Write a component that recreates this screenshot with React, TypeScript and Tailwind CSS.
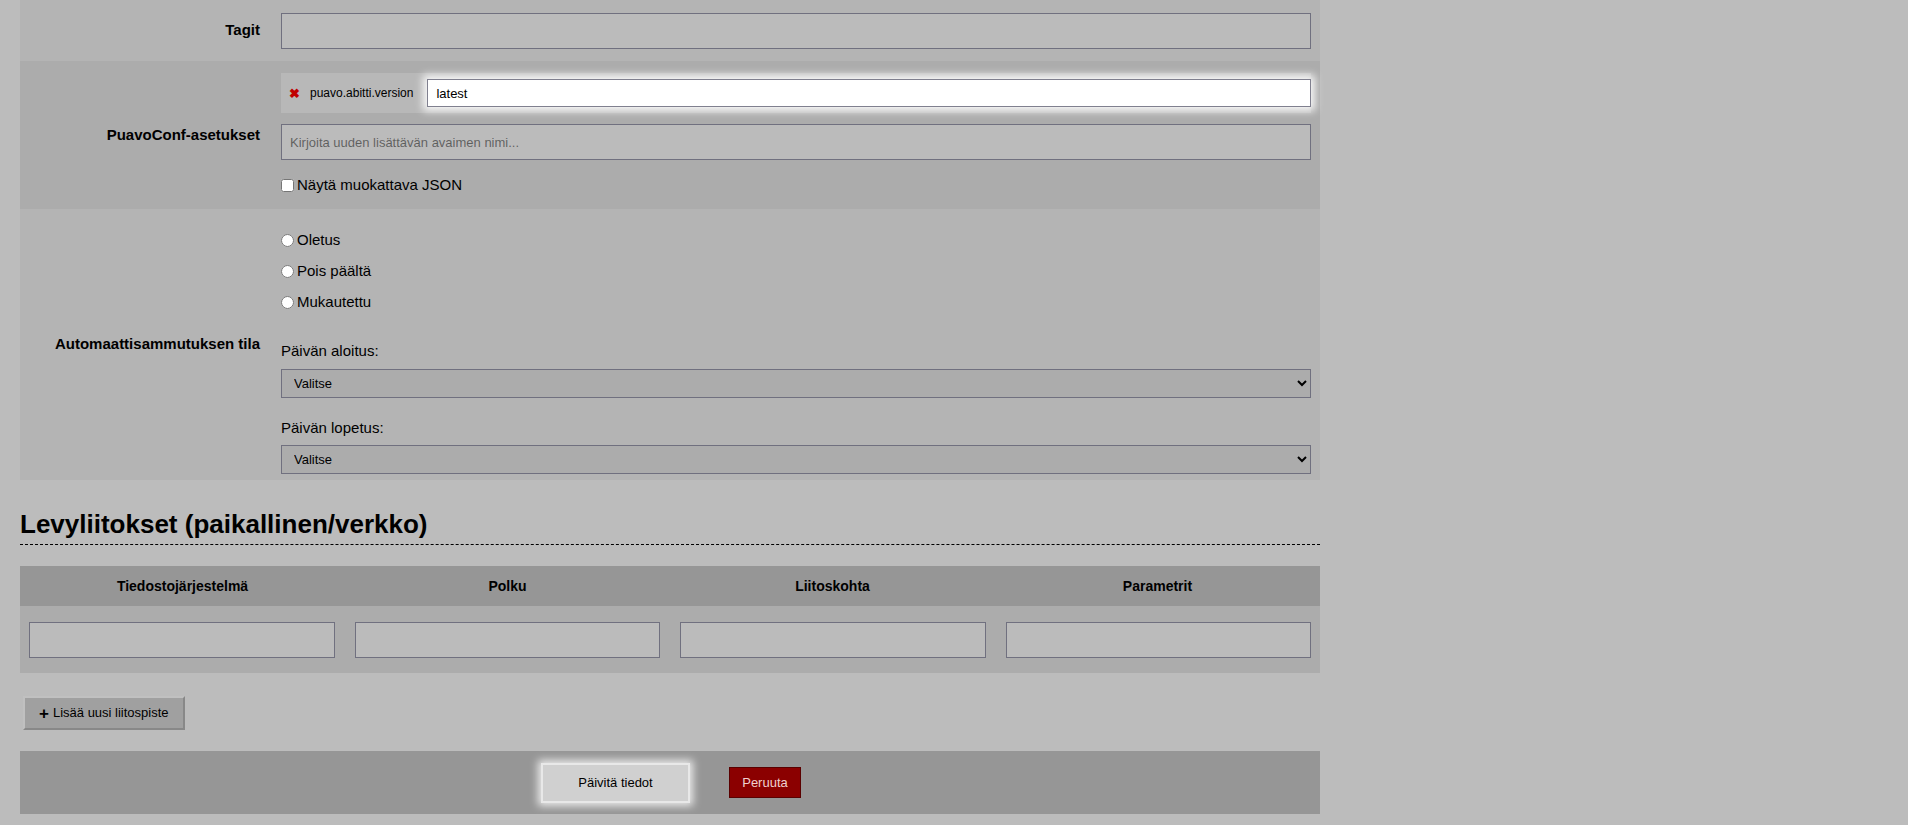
import React from 'react';

const inputCls = 'h-[36px] w-full border border-[#70707f] bg-[#bbbbbb] px-2 text-[13px] outline-none';

function Row({ label, bg, children }: { label: string; bg: string; children: React.ReactNode }) {
  return (
    <div className={`flex items-center ${bg}`}>
      <div className="w-[240px] shrink-0 text-right text-[15px] font-bold">{label}</div>
      <div className="ml-[21px] mr-[9px] flex-1">{children}</div>
    </div>
  );
}

export default function App() {
  return (
    <div className="min-h-[825px] bg-[#bcbcbc] text-black" style={{ fontFamily: '"Liberation Sans", Arial, sans-serif' }}>
      <div className="ml-[20px] w-[1300px]">
        {/* Tagit */}
        <Row label="Tagit" bg="bg-[#b4b4b4] h-[61px]">
          <input className={inputCls} />
        </Row>

        {/* PuavoConf */}
        <Row label="PuavoConf-asetukset" bg="bg-[#acacac] h-[148px]">
          <div className="flex flex-col">
            <div className="flex h-[40px] items-center bg-[#b8b8b8] pl-2 pr-0">
              <span className="text-[13px] font-bold text-[#c00000]">✖</span>
              <span className="ml-[10px] text-[12px]">puavo.abitti.version</span>
              <input
                defaultValue="latest"
                className="ml-[14px] h-[28px] flex-1 border border-[#80808f] bg-white px-2 text-[13px] shadow-[0_0_8px_4px_rgba(255,255,255,0.9)] outline-none"
              />
            </div>
            <input className={`${inputCls} mt-[11px]`} placeholder="Kirjoita uuden lisättävän avaimen nimi..." />
            <label className="mt-[14px] flex items-center gap-[3px] text-[15px]">
              <input type="checkbox" className="m-0 h-[13px] w-[13px]" /> Näytä muokattava JSON
            </label>
          </div>
        </Row>

        {/* Automaattisammutus */}
        <Row label="Automaattisammutuksen tila" bg="bg-[#b4b4b4] h-[271px]">
          <div className="flex flex-col pt-[10px] text-[15px]">
            {['Oletus', 'Pois päältä', 'Mukautettu'].map((o) => (
              <label key={o} className="flex h-[31px] items-center gap-[3px]">
                <input type="radio" name="auto" className="m-0 h-[13px] w-[13px]" /> {o}
              </label>
            ))}
            <div className="mt-[22px] text-[15px]">Päivän aloitus:</div>
            <select className="mt-[6px] h-[29px] w-full border border-[#70707f] bg-[#acacac] px-2 text-[13px]">
              <option>Valitse</option>
            </select>
            <div className="mt-[19px] text-[15px]">Päivän lopetus:</div>
            <select className="mt-[6px] h-[29px] w-full border border-[#70707f] bg-[#acacac] px-2 text-[13px]">
              <option>Valitse</option>
            </select>
          </div>
        </Row>

        {/* Levyliitokset */}
        <h2 className="mt-[28px] border-b border-dashed border-black pb-[4px] text-[26px] font-bold leading-[32px]">
          Levyliitokset (paikallinen/verkko)
        </h2>
        <div className="mt-[21px]">
          <div className="grid h-[40px] grid-cols-4 items-center bg-[#969696] text-center text-[14px] font-bold">
            <div>Tiedostojärjestelmä</div>
            <div>Polku</div>
            <div>Liitoskohta</div>
            <div>Parametrit</div>
          </div>
          <div className="grid h-[67px] grid-cols-4 items-center gap-[20px] bg-[#acacac] px-[9px]">
            <input className={inputCls} />
            <input className={inputCls} />
            <input className={inputCls} />
            <input className={inputCls} />
          </div>
        </div>

        <button className="ml-[3px] mt-[23px] flex h-[34px] items-center gap-[4px] border-2 border-t-[#c0c0c0] border-l-[#c0c0c0] border-r-[#888] border-b-[#888] bg-[#a0a0a0] px-[14px] text-[13px]">
          <span className="text-[17px] font-bold leading-none">+</span> Lisää uusi liitospiste
        </button>

        <div className="mt-[21px] flex h-[63px] items-center justify-center gap-[39px] bg-[#969696] pl-[2px]">
          <button className="h-[40px] w-[149px] border-2 border-[#e8e8e8] bg-[#d0d0d0] text-[13px] shadow-[0_0_8px_3px_rgba(255,255,255,0.8)]">
            Päivitä tiedot
          </button>
          <button className="h-[31px] w-[72px] border border-[#5a0000] bg-[#8b0000] text-[13px] text-[#f0d0d0]">Peruuta</button>
        </div>
      </div>
    </div>
  );
}
